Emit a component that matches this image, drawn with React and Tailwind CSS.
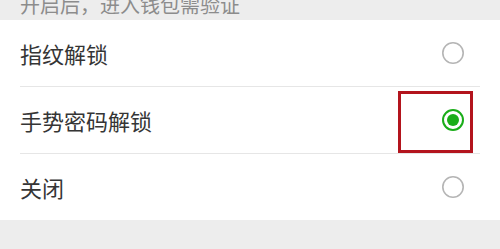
import React from 'react';

const font = { fontFamily: '"Noto Sans CJK SC", "Noto Sans", sans-serif' };

function Radio({ checked }) {
  if (checked) {
    return (
      <svg width="24" height="24" viewBox="0 0 24 24">
        <circle cx="12" cy="12" r="10" fill="none" stroke="#1aad19" strokeWidth="2" />
        <circle cx="12" cy="12" r="6" fill="#1aad19" />
      </svg>
    );
  }
  return (
    <svg width="24" height="24" viewBox="0 0 24 24">
      <circle cx="12" cy="12" r="10.2" fill="none" stroke="#b5b5b5" strokeWidth="1.6" />
    </svg>
  );
}

const options = [
  { label: '指纹解锁', checked: false },
  { label: '手势密码解锁', checked: true, marked: true },
  { label: '关闭', checked: false },
];

export default function App() {
  return (
    <div className="w-[500px] h-[249px] bg-[#ededed] flex flex-col overflow-hidden" style={font}>
      <div className="h-[20px] overflow-hidden px-5">
        <div className="-mt-[8px] text-[20px] leading-[26px] text-[#8c8c8c]">开启后，进入钱包需验证</div>
      </div>
      <div className="bg-white flex flex-col">
        {options.map((o, i) => (
          <div key={o.label} className="relative">
            {i > 0 && <div className="mx-5 h-px bg-[#e6e6e6]" />}
            <div className="h-[66px] pl-5 pr-[35px] flex items-center justify-between">
              <span className="text-[22px] text-[#353535]">{o.label}</span>
              <Radio checked={o.checked} />
            </div>
            {o.marked && (
              <div className="absolute left-[398px] top-[5px] w-[75px] h-[62px] border-[3px] border-[#b3141d]" />
            )}
          </div>
        ))}
      </div>
    </div>
  );
}
